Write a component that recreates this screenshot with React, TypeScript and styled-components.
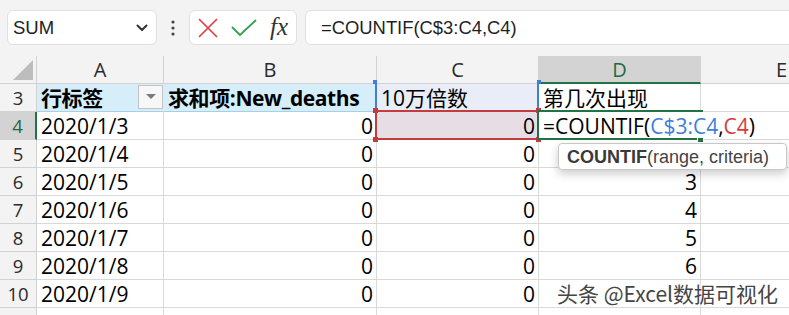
import React from 'react';
import styled, { createGlobalStyle } from 'styled-components';

const CELL_FONT = `"Open Sans", "Noto Sans CJK SC", sans-serif`;
const UI_FONT = `"Liberation Sans", "Noto Sans CJK SC", sans-serif`;

const GREEN = '#217346';
const BLUE = '#3d7fd9';
const RED = '#c23b3f';
const GRID = '#d9d9d9';
const HEAD_LINE = '#d2d2d2';

const GlobalStyle = createGlobalStyle`
  html, body { margin: 0; padding: 0; background: #ffffff; }
  body { width: 789px; height: 315px; overflow: hidden; font-family: ${UI_FONT}; }
  * { box-sizing: border-box; }
`;

const Page = styled.div`
  position: relative;
  width: 789px;
  height: 315px;
  overflow: hidden;
  background: #ffffff;
`;

/* ---------- formula toolbar ---------- */
const Toolbar = styled.div`
  height: 56px;
  background: #f3f3f3;
  display: flex;
  align-items: flex-start;
  padding: 10px 0 0 7px;
`;

const NameBox = styled.div`
  width: 150px;
  height: 35px;
  background: #ffffff;
  border: 1px solid #e0e0e0;
  border-radius: 6px;
  display: flex;
  align-items: center;
  justify-content: space-between;
  padding: 0 8px 0 5px;
  font-family: ${UI_FONT};
  font-size: 18.5px;
  color: #222;
`;

const KebabSlot = styled.div`
  width: 32px;
  height: 35px;
  display: flex;
  align-items: center;
  justify-content: center;
`;

const ButtonGroup = styled.div`
  width: 108px;
  height: 35px;
  background: #ffffff;
  border: 1px solid #e0e0e0;
  border-radius: 6px;
  display: flex;
  align-items: center;
  padding-left: 8px;
`;

const IconButton = styled.span<{ $gap?: number }>`
  display: inline-flex;
  align-items: center;
  justify-content: center;
  margin-left: ${p => p.$gap ?? 0}px;
`;

const FxLabel = styled.span`
  font-family: "Liberation Serif", "DejaVu Serif", serif;
  font-style: italic;
  font-size: 25px;
  color: #333;
  line-height: 1;
  margin-left: 13px;
  margin-top: -2px;
`;

const FormulaBox = styled.div`
  flex: 1;
  margin-left: 8px;
  margin-right: -12px;
  height: 35px;
  background: #ffffff;
  border: 1px solid #e0e0e0;
  border-radius: 6px;
  display: flex;
  align-items: center;
  padding-left: 15px;
  font-family: ${UI_FONT};
  font-size: 18.4px;
  color: #1f1f1f;
`;

/* ---------- sheet ---------- */
const Sheet = styled.div`
  display: grid;
  grid-template-columns: 37px 127px 213px 162px 162px 162px;
  grid-auto-rows: 28px;
  width: 863px;
  font-family: ${CELL_FONT};
`;

const Corner = styled.div`
  background: #f3f3f3;
  border-right: 1px solid ${HEAD_LINE};
  border-bottom: 1px solid ${HEAD_LINE};
  display: flex;
  align-items: flex-end;
  justify-content: flex-end;
  padding: 0 3px 3px 0;
`;

const CornerTriangle = styled.div`
  width: 0;
  height: 0;
  border-left: 20px solid transparent;
  border-bottom: 20px solid #bdbdbd;
`;

const ColHead = styled.div<{ $selected?: boolean }>`
  background: ${p => (p.$selected ? '#d3d3d3' : '#f3f3f3')};
  border-right: 1px solid ${HEAD_LINE};
  border-bottom: ${p => (p.$selected ? `2px solid ${GREEN}` : `1px solid ${HEAD_LINE}`)};
  display: flex;
  align-items: center;
  justify-content: center;
  padding-top: ${p => (p.$selected ? 1 : 0)}px;
  font-size: 20px;
  color: ${p => (p.$selected ? '#1d6b3f' : '#2b2b2b')};
`;

const RowHead = styled.div<{ $selected?: boolean }>`
  background: ${p => (p.$selected ? '#d3d3d3' : '#f3f3f3')};
  border-right: ${p => (p.$selected ? `2px solid ${GREEN}` : `1px solid ${HEAD_LINE}`)};
  border-bottom: 1px solid ${HEAD_LINE};
  display: flex;
  align-items: center;
  justify-content: center;
  font-size: 18.5px;
  color: ${p => (p.$selected ? '#1d6b3f' : '#2b2b2b')};
`;

type CellProps = {
  $align?: 'left' | 'right';
  $bg?: string;
  $bold?: boolean;
  $right?: string;
  $bottom?: string;
  $layer?: number;
};

const Cell = styled.div<CellProps>`
  position: ${p => (p.$layer ? 'relative' : 'static')};
  z-index: ${p => p.$layer ?? 'auto'};
  display: flex;
  align-items: flex-end;
  justify-content: ${p => (p.$align === 'right' ? 'flex-end' : 'flex-start')};
  padding: 0 3px 2px 4px;
  font-size: 21px;
  line-height: 21px;
  font-weight: ${p => (p.$bold ? 700 : 400)};
  letter-spacing: ${p => (p.$bold ? '-0.4px' : 'normal')};
  white-space: nowrap;
  color: #000;
  background: ${p => p.$bg ?? 'transparent'};
  border-right: 1px solid ${p => p.$right ?? GRID};
  border-bottom: 1px solid ${p => p.$bottom ?? GRID};
`;

const FilterButton = styled.span`
  margin-left: auto;
  margin-right: -3px;
  align-self: center;
  width: 25px;
  height: 24px;
  background: #f7f7f7;
  border: 1px solid #c3c3c3;
  display: flex;
  align-items: center;
  justify-content: center;
`;

const FilterArrow = styled.span`
  width: 0;
  height: 0;
  border-left: 5px solid transparent;
  border-right: 5px solid transparent;
  border-top: 5px solid #7a7a7a;
`;

type Sides = { $t?: boolean; $r?: boolean; $b?: boolean; $l?: boolean };

const RangeOutline = styled.div<Sides & { $color: string; $rightExtra?: number }>`
  position: absolute;
  top: -2px;
  left: -2px;
  right: ${p => -1 - (p.$rightExtra ?? 0)}px;
  bottom: -1px;
  border-style: solid;
  border-color: ${p => p.$color};
  border-width: ${p => `${p.$t ? 2 : 0}px ${p.$r ? 2 : 0}px ${p.$b ? 2 : 0}px ${p.$l ? 2 : 0}px`};
  pointer-events: none;
`;

const Handle = styled.span<{ $color: string; $x: 'left' | 'right'; $y: 'top' | 'bottom'; $size?: number }>`
  position: absolute;
  width: ${p => p.$size ?? 5}px;
  height: ${p => p.$size ?? 5}px;
  background: ${p => p.$color};
  ${p => (p.$x === 'left' ? 'left: -4px;' : 'right: -3px;')}
  ${p => (p.$y === 'top' ? 'top: -4px;' : 'bottom: -3px;')}
`;

const FillHandle = styled.span`
  position: absolute;
  right: -4px;
  bottom: -4px;
  width: 7px;
  height: 6px;
  background: ${GREEN};
  border: 1px solid #ffffff;
`;

const Ref = styled.span<{ $color: string }>`
  color: ${p => p.$color};
`;

const Tooltip = styled.div`
  position: absolute;
  left: 19px;
  top: 31px;
  width: 229px;
  height: 27px;
  background: #ffffff;
  border: 1px solid #c8c8c8;
  border-radius: 4px;
  box-shadow: 0 4px 10px rgba(0, 0, 0, 0.2);
  display: flex;
  align-items: center;
  padding-left: 8px;
  font-family: ${UI_FONT};
  font-size: 18px;
  line-height: 1;
  color: #444;
  z-index: 5;
`;

const TipName = styled.span`
  font-weight: 700;
  color: #3a3a3a;
`;

const Watermark = styled.div`
  position: absolute;
  left: 557px;
  top: 281px;
  font-family: "Noto Sans CJK SC", sans-serif;
  font-size: 21px;
  line-height: 24px;
  color: #454545;
  letter-spacing: 0;
  text-shadow: 0 0 2px #fff, 0 0 2px #fff, 0 0 3px #fff;
  z-index: 10;
`;

const ChevronDown = () => (
  <svg width="12" height="8" viewBox="0 0 12 8">
    <path d="M1.5 1.5 L6 6 L10.5 1.5" fill="none" stroke="#333" strokeWidth="2" strokeLinecap="round" strokeLinejoin="round" />
  </svg>
);

const Kebab = () => (
  <svg width="4" height="16" viewBox="0 0 4 16">
    <circle cx="2" cy="2" r="1.6" fill="#444" />
    <circle cx="2" cy="8" r="1.6" fill="#444" />
    <circle cx="2" cy="14" r="1.6" fill="#444" />
  </svg>
);

const CancelIcon = () => (
  <svg width="20" height="20" viewBox="0 0 20 20">
    <path d="M1.5 1.5 L18.5 18.5 M18.5 1.5 L1.5 18.5" stroke="#e23e3e" strokeWidth="1.7" strokeLinecap="round" />
  </svg>
);

const EnterIcon = () => (
  <svg width="26" height="18" viewBox="0 0 26 18">
    <path d="M1.5 8.5 L9 16 L24.5 1.5" fill="none" stroke="#34a04f" strokeWidth="1.8" strokeLinecap="round" strokeLinejoin="round" />
  </svg>
);

const dataRows = [
  { n: '5', a: '2020/1/4', b: '0', c: '0', d: '' },
  { n: '6', a: '2020/1/5', b: '0', c: '0', d: '3' },
  { n: '7', a: '2020/1/6', b: '0', c: '0', d: '4' },
  { n: '8', a: '2020/1/7', b: '0', c: '0', d: '5' },
  { n: '9', a: '2020/1/8', b: '0', c: '0', d: '6' },
  { n: '10', a: '2020/1/9', b: '0', c: '0', d: '' },
  { n: '', a: '', b: '', c: '', d: '' },
];

const PIVOT_BG = '#d6eefa';
const PIVOT_LINE = '#a6d0ea';

export default function App() {
  return (
    <Page>
      <GlobalStyle />
      <Toolbar>
        <NameBox>
          <span>SUM</span>
          <ChevronDown />
        </NameBox>
        <KebabSlot>
          <Kebab />
        </KebabSlot>
        <ButtonGroup>
          <IconButton>
            <CancelIcon />
          </IconButton>
          <IconButton $gap={13}>
            <EnterIcon />
          </IconButton>
          <FxLabel>fx</FxLabel>
        </ButtonGroup>
        <FormulaBox>=COUNTIF(C$3:C4,C4)</FormulaBox>
      </Toolbar>

      <Sheet>
        <Corner>
          <CornerTriangle />
        </Corner>
        <ColHead>A</ColHead>
        <ColHead>B</ColHead>
        <ColHead>C</ColHead>
        <ColHead $selected>D</ColHead>
        <ColHead>E</ColHead>

        {/* row 3 */}
        <RowHead>3</RowHead>
        <Cell $bg={PIVOT_BG} $bold $right={PIVOT_BG} $bottom={PIVOT_LINE}>
          行标签
          <FilterButton>
            <FilterArrow />
          </FilterButton>
        </Cell>
        <Cell $bg={PIVOT_BG} $bold $bottom={PIVOT_LINE}>
          求和项:New_deaths
        </Cell>
        <Cell $bg="#e8edf8" $layer={1}>
          10万倍数
          <RangeOutline $color={BLUE} $l $r />
          <Handle $color={BLUE} $x="left" $y="top" $size={4} />
          <Handle $color={BLUE} $x="right" $y="top" $size={4} />
        </Cell>
        <Cell>第几次出现</Cell>
        <Cell />

        {/* row 4 */}
        <RowHead $selected>4</RowHead>
        <Cell>2020/1/3</Cell>
        <Cell $align="right">0</Cell>
        <Cell $align="right" $bg="#e7dde5" $layer={2}>
          0
          <RangeOutline $color={RED} $t $r $b $l />
          <Handle $color={RED} $x="left" $y="top" />
          <Handle $color={RED} $x="right" $y="top" />
          <Handle $color={RED} $x="left" $y="bottom" />
          <Handle $color={RED} $x="right" $y="bottom" />
        </Cell>
        <Cell $bg="#ffffff" $right="transparent" $layer={3}>
          <span>
            =COUNTIF(<Ref $color={BLUE}>C$3:C4</Ref>,<Ref $color="#d83a40">C4</Ref>)
          </span>
          <RangeOutline $color={GREEN} $t $b $l $rightExtra={2} />
          <FillHandle />
          <Tooltip>
            <TipName>COUNTIF</TipName>(range, criteria)
          </Tooltip>
        </Cell>
        <Cell />

        {dataRows.map((r, i) => (
          <React.Fragment key={i}>
            <RowHead>{r.n}</RowHead>
            <Cell>{r.a}</Cell>
            <Cell $align="right">{r.b}</Cell>
            <Cell $align="right">{r.c}</Cell>
            <Cell $align="right">{r.d}</Cell>
            <Cell />
          </React.Fragment>
        ))}
      </Sheet>

      <Watermark>头条 @Excel数据可视化</Watermark>
    </Page>
  );
}
